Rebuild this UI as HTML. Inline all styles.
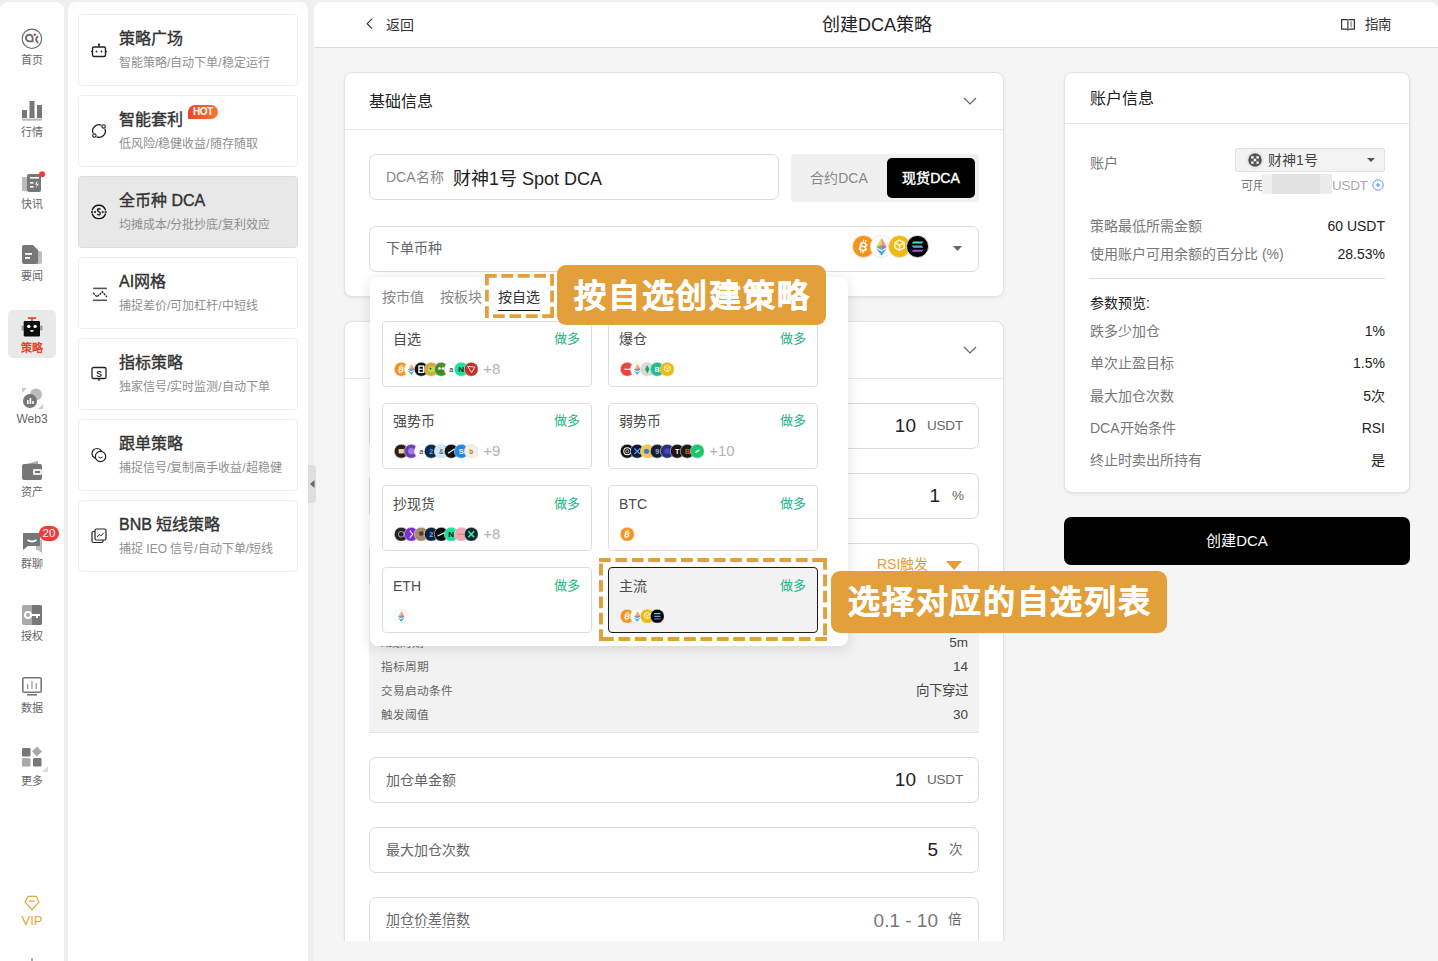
<!DOCTYPE html>
<html lang="zh-CN">
<head>
<meta charset="utf-8">
<style>
*{box-sizing:border-box;margin:0;padding:0}
html,body{width:1438px;height:961px;overflow:hidden;background:#efefef;font-family:"Liberation Sans",sans-serif;color:#222}
.abs{position:absolute}
#nav{position:absolute;left:0;top:0;width:64px;height:961px}
#nav:before{content:"";position:absolute;left:0;top:2px;width:64px;height:980px;background:#fff;border-radius:8px}
.ni{position:absolute;left:0;width:64px;text-align:center;font-size:11px;color:#666;line-height:14px}
#side{position:absolute;left:68px;top:0;width:240px;height:961px}
#side:before{content:"";position:absolute;left:0;top:2px;width:240px;height:980px;background:#fff;border-radius:8px}
.sc{position:absolute;width:219.5px;height:72px;border:1px solid #ededed;border-radius:4px;background:#fff}
.sc.act{background:#e8e8e8;border-color:#dcdcdc}
.sc .t{position:absolute;left:40px;top:14px;font-size:16px;font-weight:normal;-webkit-text-stroke:0.4px #333;color:#333;line-height:20px;white-space:nowrap}
.sc .s{position:absolute;left:40px;top:39.5px;font-size:12px;color:#8f8f8f;line-height:16px;white-space:nowrap}
.sc svg{position:absolute;left:12px;top:27px;overflow:visible}
.hot{position:absolute;left:109px;top:9px;width:30px;height:14px;border-radius:7px 7px 7px 0;background:linear-gradient(90deg,#f2442a,#f3782f);color:#fff;font-size:10px;font-weight:bold;line-height:14px;text-align:center;letter-spacing:-0.4px}
.card{position:absolute;background:#fff;border:1px solid #e3e3e3;border-radius:8px;box-shadow:0 1px 3px rgba(0,0,0,.08)}
.inp{position:absolute;border:1px solid #dcdcdc;border-radius:7px;background:#fff}
.lbl{position:absolute;font-size:14px;color:#666;white-space:nowrap;line-height:16px}

#mainbg{position:absolute;left:314px;top:2px;width:1124px;height:959px;background:#f5f5f5;border-radius:8px 8px 0 0}
#hdr{position:absolute;left:314px;top:2px;width:1124px;height:46px;background:#fff;border-bottom:1px solid #dcdcdc;border-radius:8px 8px 0 0}
#botbg{position:absolute;left:314px;top:941px;width:1124px;height:20px;background:#f5f5f5}
.num{font-size:19px;line-height:22px;color:#222}
.unit{font-size:13.5px;line-height:16px;color:#666;letter-spacing:-0.2px}
.lab2{font-size:14px;line-height:16px;color:#666}
.irow{position:absolute;left:380.5px;width:587.5px;height:16px;font-size:11.7px;line-height:17px;color:#666}
.irow b{position:absolute;right:0;top:-0.5px;font-weight:normal;font-size:13.5px;color:#444}
.acl{font-size:14px;line-height:16px;color:#777}
.arow{position:absolute;left:1090px;width:295px;height:16px;font-size:14px;line-height:16px;color:#777}
.arow b{position:absolute;right:0;top:0;font-weight:normal;color:#222}

#popup{position:absolute;left:369.5px;top:276.5px;width:478.5px;height:369px;background:#fff;border-radius:8px;box-shadow:0 3px 14px rgba(0,0,0,.12)}
.tab{font-size:14px;line-height:16px}
.lc{position:absolute;height:66px;border:1px solid #dedede;border-radius:4px;background:#fff}
.lc.sel{border-color:#1a1a1a;background:#f2f2f2}
.lct{font-size:14px;line-height:16px;color:#4a4a4a}
.lcd{width:48px;text-align:right;font-size:13px;line-height:16px;color:#25b586}
.lcp{font-size:15px;line-height:16px;color:#b3b3b3}
.ann{background:#e3a03a;border-radius:9px;color:#fff;font-size:32px;font-weight:bold;text-align:center;line-height:63px;letter-spacing:1.7px;padding-left:1.7px;-webkit-text-stroke:0.5px #fff}
</style>
</head>
<body>
<!-- left nav -->
<div id="nav">
<!-- 首页 -->
<svg class="abs" style="left:21px;top:28px" width="22" height="22" viewBox="0 0 22 22"><circle cx="10.9" cy="10.8" r="9.7" fill="none" stroke="#666" stroke-width="1.1"/><path d="M11.6 13.4H8.3A3.3 3.3 0 1 1 11.6 10.1Z" fill="none" stroke="#6a6a6a" stroke-width="1.9" stroke-linejoin="round"/><path d="M16.5 8.7Q13.6 11.4 16.7 14.4" fill="none" stroke="#6a6a6a" stroke-width="1.9" stroke-linecap="round"/><circle cx="13.8" cy="6.8" r="1.3" fill="#e23a1e"/></svg>
<div class="ni" style="top:53px">首页</div>
<!-- 行情 -->
<svg class="abs" style="left:22px;top:101px" width="20" height="20" viewBox="0 0 20 20"><rect x="0" y="9" width="5" height="8" fill="#777"/><rect x="7.5" y="0" width="5" height="17" fill="#777"/><rect x="15" y="4" width="5" height="13" fill="#777"/><rect x="0" y="17.5" width="20" height="2.2" fill="#bbb"/></svg>
<div class="ni" style="top:125px">行情</div>
<!-- 快讯 -->
<svg class="abs" style="left:22px;top:171px" width="24" height="24" viewBox="0 0 24 24"><rect x="0" y="6" width="6" height="14" fill="#bbb"/><rect x="5" y="3" width="14" height="18" rx="2" fill="#777"/><rect x="8" y="6" width="9" height="1.6" fill="#fff"/><rect x="8" y="11" width="3.5" height="1.6" fill="#fff"/><rect x="8" y="15" width="3.5" height="1.6" fill="#fff"/><path d="M15.5 9.5l-2.5 4h2l-1 3.5 2.8-4.3h-2z" fill="#fff"/><circle cx="20" cy="3.2" r="3" fill="#f23a3c"/></svg>
<div class="ni" style="top:197px">快讯</div>
<!-- 要闻 -->
<svg class="abs" style="left:22px;top:243px" width="20" height="22" viewBox="0 0 20 22"><rect x="12" y="8" width="8" height="13" rx="2" fill="#bbb"/><path d="M2 2h9l5 5v12a2 2 0 0 1-2 2H2a2 2 0 0 1-2-2V4a2 2 0 0 1 2-2z" fill="#777"/><rect x="3" y="10" width="7" height="1.8" fill="#fff"/><rect x="3" y="14" width="5" height="1.8" fill="#fff"/></svg>
<div class="ni" style="top:269px">要闻</div>
<!-- 策略 active -->
<div class="abs" style="left:8px;top:310px;width:48px;height:48px;background:#e9e9e9;border-radius:5px"></div>
<svg class="abs" style="left:21px;top:316px" width="22" height="22" viewBox="0 0 22 22"><path d="M6.5 1.3h9l-1 1.6h-2.7v2.3h-1.6V2.9H7.5z" fill="#e8452c"/><rect x="0.6" y="9.5" width="2.2" height="5" rx="0.6" fill="#999"/><rect x="19.2" y="9.5" width="2.2" height="5" rx="0.6" fill="#999"/><rect x="2.7" y="5" width="16.3" height="15.5" rx="1.2" fill="#0c0c0c"/><circle cx="7.8" cy="10.4" r="1.7" fill="#fff"/><circle cx="14.1" cy="10.4" r="1.7" fill="#fff"/><path d="M8.6 14.2h4.6q-1 1.8-2.3 1.8t-2.3-1.8z" fill="#fff"/></svg>
<div class="ni" style="top:341px;color:#e8452c;font-weight:bold">策略</div>
<!-- Web3 -->
<svg class="abs" style="left:22px;top:388px" width="21" height="21" viewBox="0 0 21 21"><path d="M0 0h5L0 5z" fill="#ccc"/><path d="M21 21h-5l5-5z" fill="#ccc"/><circle cx="14" cy="6.5" r="6" fill="#bbb"/><circle cx="8" cy="13" r="7" fill="#777"/><rect x="5" y="12" width="1.6" height="4" fill="#fff"/><rect x="7.6" y="10" width="1.6" height="6" fill="#fff"/><rect x="10.2" y="13" width="1.6" height="3" fill="#fff"/></svg>
<div class="ni" style="top:412px;font-size:12px">Web3</div>
<!-- 资产 -->
<svg class="abs" style="left:22px;top:460px" width="20" height="22" viewBox="0 0 20 22"><path d="M4 4l12-3v4z" fill="#aaa"/><rect x="0" y="4" width="20" height="16" rx="2" fill="#777"/><rect x="11" y="9" width="9" height="6" rx="1" fill="#fff" opacity=".85"/><rect x="13" y="11" width="5" height="2" fill="#777"/></svg>
<div class="ni" style="top:485px">资产</div>
<!-- 群聊 -->
<svg class="abs" style="left:22px;top:532px" width="20" height="22" viewBox="0 0 20 22"><path d="M14 8h6v13l-4-3h-2z" fill="#bbb"/><path d="M1 1h17v13H6l-5 4z" fill="#777"/><path d="M5.5 8q4.5 3 9 0" fill="none" stroke="#fff" stroke-width="1.8"/></svg>
<div class="abs" style="left:39px;top:526px;width:20px;height:15px;border-radius:8px;background:#f23a3c;color:#fff;font-size:11.5px;line-height:15px;text-align:center">20</div>
<div class="ni" style="top:557px">群聊</div>
<!-- 授权 -->
<svg class="abs" style="left:22px;top:605px" width="20" height="20" viewBox="0 0 20 20"><rect x="0" y="0" width="20" height="20" rx="2" fill="#aaa"/><path d="M10 0h8a2 2 0 0 1 2 2v16a2 2 0 0 1-2 2h-8z" fill="#777"/><circle cx="6" cy="10" r="3" fill="none" stroke="#fff" stroke-width="2"/><rect x="9" y="9" width="9" height="2" fill="#fff"/><rect x="14" y="11" width="2" height="2" fill="#fff"/></svg>
<div class="ni" style="top:629px">授权</div>
<!-- 数据 -->
<svg class="abs" style="left:22px;top:677px" width="20" height="20" viewBox="0 0 20 20"><rect x="0.8" y="0.8" width="18.4" height="14.4" rx="1.5" fill="none" stroke="#777" stroke-width="1.6"/><rect x="5" y="7" width="1.3" height="5" fill="#999"/><rect x="9.3" y="4" width="1.3" height="8" fill="#999"/><rect x="13.6" y="6" width="1.3" height="6" fill="#999"/><rect x="5" y="17" width="10" height="1.6" fill="#777"/></svg>
<div class="ni" style="top:701px">数据</div>
<!-- 更多 -->
<svg class="abs" style="left:22px;top:746px" width="26" height="26" viewBox="0 0 26 26"><rect x="0" y="2" width="8.5" height="8.5" rx="1.2" fill="#777"/><path d="M15 0.5l5 5-5 5-5-5z" fill="#aaa"/><rect x="0" y="12" width="8.5" height="8.5" rx="1.2" fill="#aaa"/><rect x="11" y="12" width="8.5" height="8.5" rx="1.2" fill="#777"/><path d="M26 20v6h-6z" fill="#ddd"/></svg>
<div class="ni" style="top:774px">更多</div>
<!-- VIP -->
<svg class="abs" style="left:23px;top:895px" width="18" height="18" viewBox="0 0 18 18"><path d="M5.2 1.3H13.3L16 7.2L9 14.8L2 7.2Z" fill="none" stroke="#dcab35" stroke-width="1.25" stroke-linejoin="round"/><rect x="6" y="5.3" width="5.8" height="1.5" fill="#e2bb5a"/></svg>
<div class="ni" style="top:913.5px;color:#dcab35;font-size:13px">VIP</div>
<div class="abs" style="left:31px;top:958px;width:2px;height:3px;background:#aaa"></div>
</div>
<!-- side strategy list -->
<div id="side"></div>
<div class="sc" style="left:78px;top:14px"><svg width="16" height="16" viewBox="0 0 16 16"><rect x="1.5" y="5" width="13" height="9.5" rx="1.5" fill="none" stroke="#222" stroke-width="1.4"/><circle cx="8" cy="2.5" r="1.1" fill="#222"/><rect x="7.4" y="2.5" width="1.2" height="2.5" fill="#222"/><circle cx="5.5" cy="9.5" r="0.9" fill="#222"/><circle cx="10.5" cy="9.5" r="0.9" fill="#222"/><rect x="0" y="9" width="1.5" height="1.2" fill="#222"/><rect x="14.5" y="9" width="1.5" height="1.2" fill="#222"/></svg><div class="t">策略广场</div><div class="s">智能策略/自动下单/稳定运行</div></div>
<div class="sc" style="left:78px;top:95px"><svg width="16" height="16" viewBox="0 0 16 16"><path d="M10.3 2.1A6.3 6.3 0 0 0 2.1 10.3M5.7 13.9A6.3 6.3 0 0 0 13.9 5.7" fill="none" stroke="#222" stroke-width="1.3"/><circle cx="12.6" cy="3.4" r="1.7" fill="#fff" stroke="#222" stroke-width="1.1"/><circle cx="3.4" cy="12.6" r="1.7" fill="#fff" stroke="#222" stroke-width="1.1"/></svg><div class="t">智能套利</div><div class="hot">HOT</div><div class="s">低风险/稳健收益/随存随取</div></div>
<div class="sc act" style="left:78px;top:176px"><svg width="16" height="16" viewBox="0 0 16 16"><g transform="translate(-1 0)"><path d="M2.1 6.4A7 7 0 0 1 15.6 6.4M2.1 9.5A7 7 0 0 0 15.6 9.5" fill="none" stroke="#111" stroke-width="1.3"/><path d="M1 8h2M4 8h2M11.7 8h2M14.7 8h2" stroke="#111" stroke-width="1.5"/><path d="M10.6 5.3Q9 4.3 7.8 5.1Q6.9 6.3 8.6 7.5L9.3 8Q10.9 9.2 10 10.4Q8.8 11.3 7.2 10.3" fill="none" stroke="#111" stroke-width="1.3"/></g></svg><div class="t">全币种 DCA</div><div class="s">均摊成本/分批抄底/复利效应</div></div>
<div class="sc" style="left:78px;top:257px"><svg width="16" height="16" viewBox="0 0 16 16"><rect x="2.1" y="2.6" width="13.8" height="1.6" fill="#555"/><rect x="2.1" y="14.5" width="13.8" height="1.6" fill="#555"/><path d="M2.2 7.9L6 11.9l5.4-5.1 4.5 5.2" fill="none" stroke="#222" stroke-width="1.3" stroke-dasharray="2.2 0.8"/></svg><div class="t">AI网格</div><div class="s">捕捉差价/可加杠杆/中短线</div></div>
<div class="sc" style="left:78px;top:338px"><svg width="16" height="16" viewBox="0 0 16 16"><rect x="1" y="1.5" width="14" height="11" rx="1.5" fill="none" stroke="#222" stroke-width="1.3"/><text x="8" y="10.5" font-size="8.5" font-weight="bold" text-anchor="middle" fill="#222" font-family="Liberation Sans">S</text><path d="M6.5 14.5l1.5-2 1.5 2z" fill="#222"/></svg><div class="t">指标策略</div><div class="s">独家信号/实时监测/自动下单</div></div>
<div class="sc" style="left:78px;top:419px"><svg width="16" height="16" viewBox="0 0 16 16"><circle cx="6" cy="6.5" r="5" fill="none" stroke="#222" stroke-width="1.2"/><circle cx="9.5" cy="9.5" r="5.2" fill="#fff" stroke="#222" stroke-width="1.2"/><path d="M7.5 10q2 1.6 4 0" fill="none" stroke="#222" stroke-width="1"/></svg><div class="t">跟单策略</div><div class="s">捕捉信号/复制高手收益/超稳健</div></div>
<div class="sc" style="left:78px;top:500px"><svg width="16" height="16" viewBox="0 0 16 16"><rect x="1" y="3.5" width="11" height="11" rx="1.5" fill="none" stroke="#222" stroke-width="1.2"/><rect x="4" y="1" width="11" height="11" rx="1.5" fill="#fff" stroke="#222" stroke-width="1.2"/><path d="M6 9l2.2-2.5 1.6 1.5 3-3.2" fill="none" stroke="#222" stroke-width="1"/></svg><div class="t">BNB 短线策略</div><div class="s">捕捉 IEO 信号/自动下单/短线</div></div>

<!-- main -->

<div id="mainbg"></div>
<div class="abs" style="left:308px;top:465px;width:8px;height:38px;background:#dedede;border-radius:0 3px 3px 0"></div><svg class="abs" style="left:310px;top:480px" width="5" height="8" viewBox="0 0 5 8"><path d="M4.5 0v8L0 4z" fill="#666"/></svg>
<div id="hdr"></div>
<svg class="abs" style="left:365px;top:17px" width="9" height="14" viewBox="0 0 9 14"><path d="M7 1.8L2.2 6.7L7 11.6" fill="none" stroke="#333" stroke-width="1.2"/></svg>
<div class="abs" style="left:386px;top:16.5px;font-size:14px;line-height:16px;color:#333">返回</div>
<div class="abs" style="left:777px;top:14px;width:200px;text-align:center;font-size:18px;line-height:22px;color:#222">创建DCA策略</div>
<svg class="abs" style="left:1340px;top:18px" width="16" height="14" viewBox="0 0 16 14"><path d="M1.6 1.6h6.4v9.6H1.6z" fill="none" stroke="#333" stroke-width="1.2"/><path d="M8 1.6h6.4v9.6H8z" fill="none" stroke="#333" stroke-width="1.2"/><rect x="10.2" y="3.3" width="2" height="6" fill="#aaa"/><rect x="7.4" y="10.5" width="1.3" height="2.2" fill="#333"/><rect x="7.5" y="1" width="1.5" height="10.5" fill="#999"/></svg>
<div class="abs" style="left:1364.5px;top:16.5px;font-size:13.5px;line-height:16px;color:#333">指南</div>

<!-- card 1 -->
<div class="card" style="left:344px;top:72px;width:660px;height:225px"></div>
<div class="abs" style="left:369px;top:93px;font-size:16px;line-height:18px;color:#222">基础信息</div>
<svg class="abs chev" style="left:963px;top:97px" width="14" height="8" viewBox="0 0 14 8"><path d="M1 1l6 6 6-6" fill="none" stroke="#666" stroke-width="1.2"/></svg>
<div class="abs" style="left:345px;top:129px;width:658px;height:1px;background:#e6e6e6"></div>
<div class="inp" style="left:369px;top:154px;width:410px;height:46px"></div>
<div class="abs" style="left:386px;top:169px;font-size:14px;line-height:16px;color:#888">DCA名称</div>
<div class="abs" style="left:453px;top:167.5px;font-size:18px;line-height:22px;color:#222">财神1号 Spot DCA</div>
<div class="abs" style="left:791px;top:154px;width:188px;height:48px;background:#f0f0f0;border-radius:4px"></div>
<div class="abs" style="left:791px;top:170px;width:96px;text-align:center;font-size:14px;line-height:16px;color:#888">合约DCA</div>
<div class="abs" style="left:887px;top:158px;width:88px;height:40px;background:#000;border-radius:5px;color:#fff;font-size:14px;font-weight:normal;-webkit-text-stroke:0.45px #fff;line-height:40px;text-align:center">现货DCA</div>
<div class="inp" style="left:369px;top:226px;width:610px;height:46px"></div>
<div class="abs" style="left:386px;top:240px;font-size:14px;line-height:16px;color:#666">下单币种</div>

<svg class="abs" style="left:851.5px;top:234.5px" width="23" height="23" viewBox="0 0 100 100"><circle cx="50" cy="50" r="48" fill="#f7931a" stroke="#e6e6e6" stroke-width="4"/><g transform="rotate(14 50 50)"><text x="50" y="70" font-size="54" font-weight="bold" text-anchor="middle" fill="#fff" font-family="Liberation Sans">B</text><path d="M44 20v10M54 20v10M44 70v10M54 70v10" stroke="#fff" stroke-width="5"/></g></svg><svg class="abs" style="left:869.5px;top:234.5px" width="23" height="23" viewBox="0 0 100 100"><circle cx="50" cy="50" r="48" fill="#fff" stroke="#e6e6e6" stroke-width="4"/><path d="M50 12L27 52l23-10z" fill="#f4d35e"/><path d="M50 12l23 40-23-10z" fill="#f08a7a"/><path d="M27 52l23 14V42z" fill="#5dbb7c"/><path d="M73 52L50 66V42z" fill="#9b6fd0"/><path d="M27 58l23 32 23-32-23 14z" fill="#3fa8e0"/></svg><svg class="abs" style="left:887.5px;top:234.5px" width="23" height="23" viewBox="0 0 100 100"><circle cx="50" cy="50" r="48" fill="#f0b90b" stroke="#e6e6e6" stroke-width="4"/><path d="M50 22l20 11v23L50 67 30 56V33z" fill="none" stroke="#fff" stroke-width="6" opacity=".9"/><path d="M30 33l20 12 20-12M50 45v22" fill="none" stroke="#fff" stroke-width="6" opacity=".9"/></svg><svg class="abs" style="left:905.5px;top:234.5px" width="23" height="23" viewBox="0 0 100 100"><circle cx="50" cy="50" r="48" fill="#000" stroke="#e6e6e6" stroke-width="4"/><path d="M32 28h44l-8 9H24z" fill="#3ee8c0"/><path d="M24 46h44l8 9H32z" fill="#6aa0e0"/><path d="M32 64h44l-8 9H24z" fill="#a150f0"/></svg>
<svg class="abs" style="left:953px;top:246px" width="9" height="5" viewBox="0 0 9 5"><path d="M0 0h9L4.5 5z" fill="#666"/></svg>

<!-- card 2 -->
<div class="card" style="left:344px;top:321px;width:660px;height:640px;border-bottom:none;border-radius:8px 8px 0 0"></div>
<svg class="abs chev" style="left:963px;top:346px" width="14" height="8" viewBox="0 0 14 8"><path d="M1 1l6 6 6-6" fill="none" stroke="#666" stroke-width="1.2"/></svg>
<div class="abs" style="left:345px;top:378px;width:658px;height:1px;background:#e6e6e6"></div>
<div class="inp" style="left:369px;top:403px;width:610px;height:46px"></div>
<div class="abs num" style="left:880px;top:415px;width:36px;text-align:right">10</div>
<div class="abs unit" style="left:927px;top:418px">USDT</div>
<div class="inp" style="left:369px;top:473px;width:610px;height:46px"></div>
<div class="abs num" style="left:900px;top:485px;width:40px;text-align:right">1</div>
<div class="abs unit" style="left:952px;top:488px">%</div>
<div class="inp" style="left:369px;top:543px;width:610px;height:46px"></div>
<div class="abs" style="left:877px;top:556px;font-size:14px;line-height:16px;color:#e39e35">RSI触发</div>
<svg class="abs" style="left:946px;top:561px" width="16" height="9" viewBox="0 0 16 9"><path d="M0 0h16L8 9z" fill="#e39e35"/></svg>
<div class="abs" style="left:369px;top:588px;width:610px;height:145px;background:#f2f2f2;border-bottom:1px solid #e3e3e3"></div>
<div class="irow" style="top:634px"><span>K线周期</span><b>5m</b></div>
<div class="irow" style="top:658px"><span>指标周期</span><b>14</b></div>
<div class="irow" style="top:682px"><span>交易启动条件</span><b>向下穿过</b></div>
<div class="irow" style="top:706px"><span>触发阈值</span><b>30</b></div>
<div class="inp" style="left:369px;top:757px;width:610px;height:46px"></div>
<div class="abs lab2" style="left:386px;top:772px">加仓单金额</div>
<div class="abs num" style="left:880px;top:769px;width:36px;text-align:right">10</div>
<div class="abs unit" style="left:927px;top:772px">USDT</div>
<div class="inp" style="left:369px;top:827px;width:610px;height:46px"></div>
<div class="abs lab2" style="left:386px;top:842px">最大加仓次数</div>
<div class="abs num" style="left:900px;top:839px;width:38px;text-align:right">5</div>
<div class="abs unit" style="left:949px;top:842px">次</div>
<div class="inp" style="left:369px;top:897px;width:610px;height:60px"></div>
<div class="abs lab2" style="left:386px;top:912px;border-bottom:1px dashed #888;line-height:15px">加仓价差倍数</div>
<div class="abs num" style="left:840px;top:910px;width:98px;text-align:right;color:#777">0.1 - 10</div>
<div class="abs unit" style="left:948px;top:912px">倍</div>
<div id="botbg"></div>
<div id="popup"></div>
<div class="abs tab" style="left:382px;top:289px;color:#888">按市值</div><div class="abs tab" style="left:440px;top:289px;color:#888">按板块</div><div class="abs tab" style="left:498px;top:289px;color:#333">按自选</div><div class="abs" style="left:498px;top:309.5px;width:42px;height:1.5px;background:#111"></div>
<div class="lc" style="left:382px;top:321px;width:210px"></div><div class="abs lct" style="left:393px;top:331px">自选</div><div class="abs lcd" style="left:531.5px;top:331px">做多</div><svg class="abs" style="left:394.0px;top:362px" width="14.5" height="14.5" viewBox="0 0 100 100"><circle cx="50" cy="50" r="48" fill="#f7931a" stroke="#e6e6e6" stroke-width="4"/><g transform="rotate(14 50 50)"><text x="50" y="70" font-size="54" font-weight="bold" text-anchor="middle" fill="#fff" font-family="Liberation Sans">B</text><path d="M44 20v10M54 20v10M44 70v10M54 70v10" stroke="#fff" stroke-width="5"/></g></svg><svg class="abs" style="left:403.95px;top:362px" width="14.5" height="14.5" viewBox="0 0 100 100"><circle cx="50" cy="50" r="48" fill="#fff" stroke="#e6e6e6" stroke-width="4"/><path d="M50 12L27 52l23-10z" fill="#f4d35e"/><path d="M50 12l23 40-23-10z" fill="#f08a7a"/><path d="M27 52l23 14V42z" fill="#5dbb7c"/><path d="M73 52L50 66V42z" fill="#9b6fd0"/><path d="M27 58l23 32 23-32-23 14z" fill="#3fa8e0"/></svg><svg class="abs" style="left:413.9px;top:362px" width="14.5" height="14.5" viewBox="0 0 100 100"><circle cx="50" cy="50" r="48" fill="#111" stroke="#e6e6e6" stroke-width="4"/><rect x="34" y="28" width="32" height="44" fill="none" stroke="#fff" stroke-width="9"/><rect x="34" y="46" width="26" height="8" fill="#fff"/></svg><svg class="abs" style="left:423.85px;top:362px" width="14.5" height="14.5" viewBox="0 0 100 100"><circle cx="50" cy="50" r="48" fill="#d8a73a" stroke="#e6e6e6" stroke-width="4"/><circle cx="50" cy="52" r="22" fill="#b5e03b"/><circle cx="45" cy="45" r="6" fill="#333"/></svg><svg class="abs" style="left:433.8px;top:362px" width="14.5" height="14.5" viewBox="0 0 100 100"><circle cx="50" cy="50" r="48" fill="#4c8a2c" stroke="#e6e6e6" stroke-width="4"/><circle cx="38" cy="45" r="9" fill="#fff"/><circle cx="62" cy="45" r="9" fill="#fff"/><rect x="30" y="62" width="40" height="8" fill="#b4392a"/></svg><svg class="abs" style="left:443.75px;top:362px" width="14.5" height="14.5" viewBox="0 0 100 100"><circle cx="50" cy="50" r="48" fill="#fff" stroke="#e6e6e6" stroke-width="4"/><text x="50" y="66" font-size="48" text-anchor="middle" fill="#111" font-family="Liberation Sans">a</text></svg><svg class="abs" style="left:453.7px;top:362px" width="14.5" height="14.5" viewBox="0 0 100 100"><circle cx="50" cy="50" r="48" fill="#12e59a" stroke="#e6e6e6" stroke-width="4"/><text x="50" y="70" font-size="56" font-weight="bold" text-anchor="middle" fill="#111" font-family="Liberation Sans">N</text></svg><svg class="abs" style="left:463.65px;top:362px" width="14.5" height="14.5" viewBox="0 0 100 100"><circle cx="50" cy="50" r="48" fill="#c0302a" stroke="#e6e6e6" stroke-width="4"/><path d="M25 30l50 5-22 38z" fill="none" stroke="#fff" stroke-width="6"/></svg><div class="abs lcp" style="left:483.15px;top:361px">+8</div>
<div class="lc" style="left:608px;top:321px;width:210px"></div><div class="abs lct" style="left:619px;top:331px">爆仓</div><div class="abs lcd" style="left:758px;top:331px">做多</div><svg class="abs" style="left:620.0px;top:362px" width="14.5" height="14.5" viewBox="0 0 100 100"><circle cx="50" cy="50" r="48" fill="#e5463f" stroke="#e6e6e6" stroke-width="4"/><path d="M30 50h40" stroke="#fff" stroke-width="8"/></svg><svg class="abs" style="left:629.95px;top:362px" width="14.5" height="14.5" viewBox="0 0 100 100"><circle cx="50" cy="50" r="48" fill="#fff" stroke="#e6e6e6" stroke-width="4"/><path d="M50 12L27 52l23-10z" fill="#f4d35e"/><path d="M50 12l23 40-23-10z" fill="#f08a7a"/><path d="M27 52l23 14V42z" fill="#5dbb7c"/><path d="M73 52L50 66V42z" fill="#9b6fd0"/><path d="M27 58l23 32 23-32-23 14z" fill="#3fa8e0"/></svg><svg class="abs" style="left:639.9px;top:362px" width="14.5" height="14.5" viewBox="0 0 100 100"><circle cx="50" cy="50" r="48" fill="#d9d9d9" stroke="#e6e6e6" stroke-width="4"/><path d="M50 20L35 50l15 30 15-30z" fill="#26a65b"/></svg><svg class="abs" style="left:649.85px;top:362px" width="14.5" height="14.5" viewBox="0 0 100 100"><circle cx="50" cy="50" r="48" fill="#1fbf8f" stroke="#e6e6e6" stroke-width="4"/><text x="50" y="68" font-size="48" font-weight="bold" text-anchor="middle" fill="#fff" font-family="Liberation Sans">B</text></svg><svg class="abs" style="left:659.8px;top:362px" width="14.5" height="14.5" viewBox="0 0 100 100"><circle cx="50" cy="50" r="48" fill="#f0b90b" stroke="#e6e6e6" stroke-width="4"/><path d="M50 22l20 11v23L50 67 30 56V33z" fill="none" stroke="#fff" stroke-width="6" opacity=".9"/><path d="M30 33l20 12 20-12M50 45v22" fill="none" stroke="#fff" stroke-width="6" opacity=".9"/></svg>
<div class="lc" style="left:382px;top:403px;width:210px"></div><div class="abs lct" style="left:393px;top:413px">强势币</div><div class="abs lcd" style="left:531.5px;top:413px">做多</div><svg class="abs" style="left:394.0px;top:444px" width="14.5" height="14.5" viewBox="0 0 100 100"><circle cx="50" cy="50" r="48" fill="#2a1d18" stroke="#e6e6e6" stroke-width="4"/><rect x="32" y="35" width="36" height="30" fill="#e8d9b0"/></svg><svg class="abs" style="left:403.95px;top:444px" width="14.5" height="14.5" viewBox="0 0 100 100"><circle cx="50" cy="50" r="48" fill="#6d3fb0" stroke="#e6e6e6" stroke-width="4"/><circle cx="50" cy="50" r="22" fill="#a678e8"/></svg><svg class="abs" style="left:413.9px;top:444px" width="14.5" height="14.5" viewBox="0 0 100 100"><circle cx="50" cy="50" r="48" fill="#fff" stroke="#e6e6e6" stroke-width="4"/><text x="50" y="66" font-size="48" text-anchor="middle" fill="#111" font-family="Liberation Sans">a</text></svg><svg class="abs" style="left:423.85px;top:444px" width="14.5" height="14.5" viewBox="0 0 100 100"><circle cx="50" cy="50" r="48" fill="#0d2a4a" stroke="#e6e6e6" stroke-width="4"/><text x="50" y="68" font-size="50" font-weight="bold" text-anchor="middle" fill="#38b6ff" font-family="Liberation Sans">2</text></svg><svg class="abs" style="left:433.8px;top:444px" width="14.5" height="14.5" viewBox="0 0 100 100"><circle cx="50" cy="50" r="48" fill="#cfe8f5" stroke="#e6e6e6" stroke-width="4"/><text x="50" y="66" font-size="44" text-anchor="middle" fill="#333" font-family="Liberation Sans">&amp;</text></svg><svg class="abs" style="left:443.75px;top:444px" width="14.5" height="14.5" viewBox="0 0 100 100"><circle cx="50" cy="50" r="48" fill="#111" stroke="#e6e6e6" stroke-width="4"/><path d="M28 64L72 34" stroke="#fff" stroke-width="8"/></svg><svg class="abs" style="left:453.7px;top:444px" width="14.5" height="14.5" viewBox="0 0 100 100"><circle cx="50" cy="50" r="48" fill="#1e88e5" stroke="#e6e6e6" stroke-width="4"/><text x="50" y="68" font-size="52" font-weight="bold" text-anchor="middle" fill="#fff" font-family="Liberation Sans">S</text></svg><svg class="abs" style="left:463.65px;top:444px" width="14.5" height="14.5" viewBox="0 0 100 100"><circle cx="50" cy="50" r="48" fill="#f1eee6" stroke="#e6e6e6" stroke-width="4"/><text x="50" y="66" font-size="44" font-weight="bold" text-anchor="middle" fill="#b57b2a" font-family="Liberation Sans">b</text></svg><div class="abs lcp" style="left:483.15px;top:443px">+9</div>
<div class="lc" style="left:608px;top:403px;width:210px"></div><div class="abs lct" style="left:619px;top:413px">弱势币</div><div class="abs lcd" style="left:758px;top:413px">做多</div><svg class="abs" style="left:620.0px;top:444px" width="14.5" height="14.5" viewBox="0 0 100 100"><circle cx="50" cy="50" r="48" fill="#111" stroke="#e6e6e6" stroke-width="4"/><circle cx="50" cy="50" r="24" fill="none" stroke="#fff" stroke-width="7"/><circle cx="50" cy="50" r="11" fill="none" stroke="#fff" stroke-width="5"/></svg><svg class="abs" style="left:629.95px;top:444px" width="14.5" height="14.5" viewBox="0 0 100 100"><circle cx="50" cy="50" r="48" fill="#0a1a3a" stroke="#e6e6e6" stroke-width="4"/><path d="M30 30l40 40M70 30L30 70" stroke="#5aa9ff" stroke-width="8"/></svg><svg class="abs" style="left:639.9px;top:444px" width="14.5" height="14.5" viewBox="0 0 100 100"><circle cx="50" cy="50" r="48" fill="#f5c64b" stroke="#e6e6e6" stroke-width="4"/><circle cx="45" cy="50" r="18" fill="#3a7bd5"/></svg><svg class="abs" style="left:649.85px;top:444px" width="14.5" height="14.5" viewBox="0 0 100 100"><circle cx="50" cy="50" r="48" fill="#1b1f2b" stroke="#e6e6e6" stroke-width="4"/><text x="50" y="68" font-size="50" font-weight="bold" text-anchor="middle" fill="#8bd" font-family="Liberation Sans">9</text></svg><svg class="abs" style="left:659.8px;top:444px" width="14.5" height="14.5" viewBox="0 0 100 100"><circle cx="50" cy="50" r="48" fill="#2a2f7a" stroke="#e6e6e6" stroke-width="4"/><circle cx="50" cy="50" r="20" fill="#4048c0"/></svg><svg class="abs" style="left:669.75px;top:444px" width="14.5" height="14.5" viewBox="0 0 100 100"><circle cx="50" cy="50" r="48" fill="#161616" stroke="#e6e6e6" stroke-width="4"/><text x="50" y="68" font-size="50" font-weight="bold" text-anchor="middle" fill="#fff" font-family="Liberation Sans">T</text></svg><svg class="abs" style="left:679.7px;top:444px" width="14.5" height="14.5" viewBox="0 0 100 100"><circle cx="50" cy="50" r="48" fill="#1a1a1a" stroke="#e6e6e6" stroke-width="4"/><text x="50" y="68" font-size="50" font-weight="bold" text-anchor="middle" fill="#e84e1b" font-family="Liberation Sans">B</text></svg><svg class="abs" style="left:689.65px;top:444px" width="14.5" height="14.5" viewBox="0 0 100 100"><circle cx="50" cy="50" r="48" fill="#17c96b" stroke="#e6e6e6" stroke-width="4"/><path d="M35 60l30-20" stroke="#fff" stroke-width="10"/></svg><div class="abs lcp" style="left:709.15px;top:443px">+10</div>
<div class="lc" style="left:382px;top:485px;width:210px"></div><div class="abs lct" style="left:393px;top:495.5px">抄现货</div><div class="abs lcd" style="left:531.5px;top:495.5px">做多</div><svg class="abs" style="left:394.0px;top:526.5px" width="14.5" height="14.5" viewBox="0 0 100 100"><circle cx="50" cy="50" r="48" fill="#222" stroke="#e6e6e6" stroke-width="4"/><circle cx="50" cy="50" r="20" fill="none" stroke="#bbb" stroke-width="6"/></svg><svg class="abs" style="left:403.95px;top:526.5px" width="14.5" height="14.5" viewBox="0 0 100 100"><circle cx="50" cy="50" r="48" fill="#7b2fd6" stroke="#e6e6e6" stroke-width="4"/><path d="M40 25l20 25-20 25" stroke="#fff" stroke-width="7" fill="none"/></svg><svg class="abs" style="left:413.9px;top:526.5px" width="14.5" height="14.5" viewBox="0 0 100 100"><circle cx="50" cy="50" r="48" fill="#a68a6d" stroke="#e6e6e6" stroke-width="4"/><circle cx="50" cy="45" r="16" fill="#5a3a2a"/></svg><svg class="abs" style="left:423.85px;top:526.5px" width="14.5" height="14.5" viewBox="0 0 100 100"><circle cx="50" cy="50" r="48" fill="#0c2238" stroke="#e6e6e6" stroke-width="4"/><text x="50" y="68" font-size="50" font-weight="bold" text-anchor="middle" fill="#6ab0ff" font-family="Liberation Sans">2</text></svg><svg class="abs" style="left:433.8px;top:526.5px" width="14.5" height="14.5" viewBox="0 0 100 100"><circle cx="50" cy="50" r="48" fill="#0a0a0a" stroke="#e6e6e6" stroke-width="4"/><path d="M25 62L75 38" stroke="#fff" stroke-width="8"/></svg><svg class="abs" style="left:443.75px;top:526.5px" width="14.5" height="14.5" viewBox="0 0 100 100"><circle cx="50" cy="50" r="48" fill="#12e59a" stroke="#e6e6e6" stroke-width="4"/><text x="50" y="70" font-size="56" font-weight="bold" text-anchor="middle" fill="#111" font-family="Liberation Sans">N</text></svg><svg class="abs" style="left:453.7px;top:526.5px" width="14.5" height="14.5" viewBox="0 0 100 100"><circle cx="50" cy="50" r="48" fill="#f4a7b5" stroke="#e6e6e6" stroke-width="4"/><rect x="25" y="46" width="50" height="8" fill="#c94" /></svg><svg class="abs" style="left:463.65px;top:526.5px" width="14.5" height="14.5" viewBox="0 0 100 100"><circle cx="50" cy="50" r="48" fill="#0f2a2a" stroke="#e6e6e6" stroke-width="4"/><path d="M30 30l40 40M70 30L30 70" stroke="#3ef0c8" stroke-width="10"/></svg><div class="abs lcp" style="left:483.15px;top:525.5px">+8</div>
<div class="lc" style="left:608px;top:485px;width:210px"></div><div class="abs lct" style="left:619px;top:495.5px">BTC</div><div class="abs lcd" style="left:758px;top:495.5px">做多</div><svg class="abs" style="left:620.0px;top:526.5px" width="14.5" height="14.5" viewBox="0 0 100 100"><circle cx="50" cy="50" r="48" fill="#f7931a" stroke="#e6e6e6" stroke-width="4"/><g transform="rotate(14 50 50)"><text x="50" y="70" font-size="54" font-weight="bold" text-anchor="middle" fill="#fff" font-family="Liberation Sans">B</text><path d="M44 20v10M54 20v10M44 70v10M54 70v10" stroke="#fff" stroke-width="5"/></g></svg>
<div class="lc" style="left:382px;top:567px;width:210px"></div><div class="abs lct" style="left:393px;top:577.5px">ETH</div><div class="abs lcd" style="left:531.5px;top:577.5px">做多</div><svg class="abs" style="left:394.0px;top:608.5px" width="14.5" height="14.5" viewBox="0 0 100 100"><circle cx="50" cy="50" r="48" fill="#fff" stroke="#e6e6e6" stroke-width="4"/><path d="M50 12L27 52l23-10z" fill="#f4d35e"/><path d="M50 12l23 40-23-10z" fill="#f08a7a"/><path d="M27 52l23 14V42z" fill="#5dbb7c"/><path d="M73 52L50 66V42z" fill="#9b6fd0"/><path d="M27 58l23 32 23-32-23 14z" fill="#3fa8e0"/></svg>
<div class="lc sel" style="left:608px;top:567px;width:210px"></div><div class="abs lct" style="left:619px;top:577.5px">主流</div><div class="abs lcd" style="left:758px;top:577.5px">做多</div><svg class="abs" style="left:620.0px;top:608.5px" width="14.5" height="14.5" viewBox="0 0 100 100"><circle cx="50" cy="50" r="48" fill="#f7931a" stroke="#e6e6e6" stroke-width="4"/><g transform="rotate(14 50 50)"><text x="50" y="70" font-size="54" font-weight="bold" text-anchor="middle" fill="#fff" font-family="Liberation Sans">B</text><path d="M44 20v10M54 20v10M44 70v10M54 70v10" stroke="#fff" stroke-width="5"/></g></svg><svg class="abs" style="left:629.95px;top:608.5px" width="14.5" height="14.5" viewBox="0 0 100 100"><circle cx="50" cy="50" r="48" fill="#fff" stroke="#e6e6e6" stroke-width="4"/><path d="M50 12L27 52l23-10z" fill="#f4d35e"/><path d="M50 12l23 40-23-10z" fill="#f08a7a"/><path d="M27 52l23 14V42z" fill="#5dbb7c"/><path d="M73 52L50 66V42z" fill="#9b6fd0"/><path d="M27 58l23 32 23-32-23 14z" fill="#3fa8e0"/></svg><svg class="abs" style="left:639.9px;top:608.5px" width="14.5" height="14.5" viewBox="0 0 100 100"><circle cx="50" cy="50" r="48" fill="#f0b90b" stroke="#e6e6e6" stroke-width="4"/><path d="M50 22l20 11v23L50 67 30 56V33z" fill="none" stroke="#fff" stroke-width="6" opacity=".9"/><path d="M30 33l20 12 20-12M50 45v22" fill="none" stroke="#fff" stroke-width="6" opacity=".9"/></svg><svg class="abs" style="left:649.85px;top:608.5px" width="14.5" height="14.5" viewBox="0 0 100 100"><circle cx="50" cy="50" r="48" fill="#000" stroke="#e6e6e6" stroke-width="4"/><path d="M32 28h44l-8 9H24z" fill="#3ee8c0"/><path d="M24 46h44l8 9H32z" fill="#6aa0e0"/><path d="M32 64h44l-8 9H24z" fill="#a150f0"/></svg>

<svg class="abs" style="left:485px;top:274px" width="69" height="44" viewBox="0 0 69 44"><path d="M0 1.9H69M67.1 0V44M69 42.1H0M1.9 44V0" fill="none" stroke="#e3a03a" stroke-width="3.8" stroke-dasharray="11.8 4.6"/></svg>
<div class="abs ann" style="left:557px;top:265px;width:269px;height:60px">按自选创建策略</div>
<svg class="abs" style="left:599px;top:558px" width="228" height="83" viewBox="0 0 228 83"><path d="M0 1.95H228M226.05 0V83M228 81.05H0M1.95 83V0" fill="none" stroke="#e3a03a" stroke-width="3.9" stroke-dasharray="11.8 4.6"/></svg>
<div class="abs ann" style="left:831px;top:571px;width:336px;height:62px">选择对应的自选列表</div>


<!-- account card -->
<div class="card" style="left:1064px;top:72px;width:346px;height:421px"></div>
<div class="abs" style="left:1090px;top:90px;font-size:16px;line-height:18px;color:#222">账户信息</div>
<div class="abs" style="left:1065px;top:123px;width:344px;height:1px;background:#e6e6e6"></div>
<div class="abs acl" style="left:1090px;top:155px">账户</div>
<div class="abs" style="left:1235px;top:148px;width:150px;height:24px;background:#f3f3f3;border:1px solid #e2e2e2;border-radius:2px"></div>
<svg class="abs" style="left:1246px;top:151px" width="18" height="18" viewBox="0 0 18 18"><circle cx="9" cy="9" r="8.3" fill="none" stroke="#e3e3e3" stroke-width="1"/><circle cx="9" cy="9" r="6.8" fill="#555"/><rect x="5.2" y="5.2" width="2.4" height="2.4" fill="#fff"/><rect x="10.4" y="5.2" width="2.4" height="2.4" fill="#fff"/><rect x="5.2" y="10.4" width="2.4" height="2.4" fill="#fff"/><rect x="10.4" y="10.4" width="2.4" height="2.4" fill="#fff"/><rect x="7.8" y="7.8" width="2.4" height="2.4" fill="#fff"/></svg>
<div class="abs" style="left:1268px;top:152px;font-size:14px;line-height:16px;color:#444">财神1号</div>
<svg class="abs" style="left:1367px;top:158px" width="8" height="4" viewBox="0 0 8 4"><path d="M0 0h8L4 4z" fill="#555"/></svg>
<div class="abs" style="left:1241px;top:179px;font-size:12px;line-height:14px;color:#777">可用</div>
<div class="abs" style="left:1262px;top:174px;width:70px;height:20px;background:linear-gradient(90deg,#f0f0f0 0,#f0f0f0 10px,#e2e2e2 10px,#e2e2e2 58px,#ececec 58px)"></div>
<div class="abs" style="left:1332px;top:178px;font-size:13.5px;line-height:16px;color:#aaa;letter-spacing:-0.3px">USDT</div>
<svg class="abs" style="left:1372px;top:179px" width="12" height="12" viewBox="0 0 12 12"><circle cx="6" cy="6" r="5.2" fill="none" stroke="#4a90f0" stroke-width="0.9"/><path d="M6 4v4M4 6h4" stroke="#4a90f0" stroke-width="1.1"/></svg>
<div class="arow" style="top:218px"><span>策略最低所需金额</span><b>60 USDT</b></div>
<div class="arow" style="top:246px"><span>使用账户可用余额的百分比 (%)</span><b>28.53%</b></div>
<div class="abs" style="left:1089px;top:278px;width:296px;height:1px;background:#dcdcdc"></div>
<div class="abs" style="left:1090px;top:295px;font-size:14px;line-height:16px;color:#222">参数预览:</div>
<div class="arow" style="top:323px"><span>跌多少加仓</span><b>1%</b></div>
<div class="arow" style="top:355px"><span>单次止盈目标</span><b>1.5%</b></div>
<div class="arow" style="top:388px"><span>最大加仓次数</span><b>5次</b></div>
<div class="arow" style="top:420px"><span>DCA开始条件</span><b>RSI</b></div>
<div class="arow" style="top:452px"><span>终止时卖出所持有</span><b>是</b></div>
<div class="abs" style="left:1064px;top:517px;width:346px;height:48px;background:#000;border-radius:7px;color:#fff;font-size:15px;line-height:48px;text-align:center">创建DCA</div>

</body>
</html>
